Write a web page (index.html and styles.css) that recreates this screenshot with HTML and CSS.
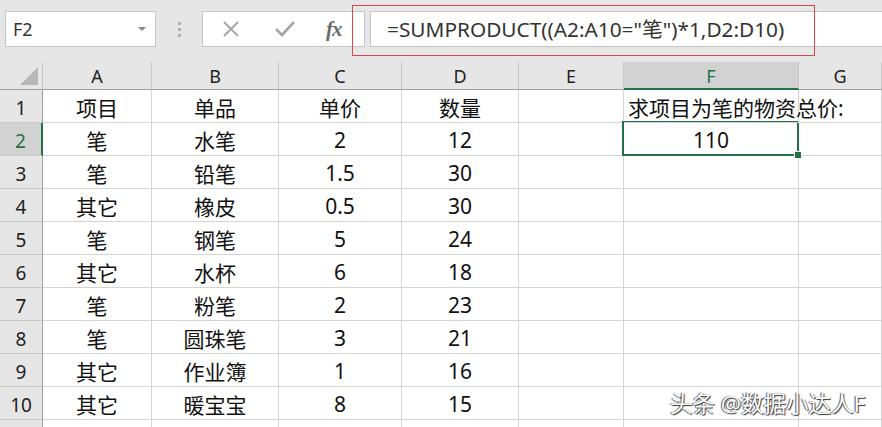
FILE: index.html
```html
<!DOCTYPE html>
<html>
<head>
<meta charset="utf-8">
<link rel="stylesheet" href="styles.css">
</head>
<body>
<div class="app">
  <div class="toolbar">
    <div class="namebox"><span class="name">F2</span><span class="caret"></span></div>
    <div class="dots"><i></i><i></i><i></i></div>
    <div class="fxbox">
      <svg class="ico" width="20" height="20" viewBox="0 0 20 20"><path d="M3 3 L17 17 M17 3 L3 17" stroke="#a6a6a6" stroke-width="2" fill="none"/></svg>
      <svg class="ico" width="22" height="20" viewBox="0 0 22 20"><path d="M2 10 L8 16 L20 3" stroke="#a6a6a6" stroke-width="2.6" fill="none"/></svg>
      <span class="fx">fx</span>
    </div>
    <div class="formula">=SUMPRODUCT((A2:A10="笔")*1,D2:D10)</div>
    <div class="highlight"></div>
  </div>
  <div class="sheet">
    <div class="corner"><span class="tri"></span></div>
    <div class="ch">A</div><div class="ch">B</div><div class="ch">C</div><div class="ch">D</div><div class="ch">E</div><div class="ch sel">F</div><div class="ch">G</div>

    <div class="rh">1</div><div class="c">项目</div><div class="c">单品</div><div class="c">单价</div><div class="c">数量</div><div class="c"></div><div class="c left">求项目为笔的物资总价:</div><div class="c"></div>
    <div class="rh sel">2</div><div class="c">笔</div><div class="c">水笔</div><div class="c">2</div><div class="c">12</div><div class="c"></div><div class="c active">110<span class="handle"></span></div><div class="c"></div>
    <div class="rh">3</div><div class="c">笔</div><div class="c">铅笔</div><div class="c">1.5</div><div class="c">30</div><div class="c"></div><div class="c"></div><div class="c"></div>
    <div class="rh">4</div><div class="c">其它</div><div class="c">橡皮</div><div class="c">0.5</div><div class="c">30</div><div class="c"></div><div class="c"></div><div class="c"></div>
    <div class="rh">5</div><div class="c">笔</div><div class="c">钢笔</div><div class="c">5</div><div class="c">24</div><div class="c"></div><div class="c"></div><div class="c"></div>
    <div class="rh">6</div><div class="c">其它</div><div class="c">水杯</div><div class="c">6</div><div class="c">18</div><div class="c"></div><div class="c"></div><div class="c"></div>
    <div class="rh">7</div><div class="c">笔</div><div class="c">粉笔</div><div class="c">2</div><div class="c">23</div><div class="c"></div><div class="c"></div><div class="c"></div>
    <div class="rh">8</div><div class="c">笔</div><div class="c">圆珠笔</div><div class="c">3</div><div class="c">21</div><div class="c"></div><div class="c"></div><div class="c"></div>
    <div class="rh">9</div><div class="c">其它</div><div class="c">作业簿</div><div class="c">1</div><div class="c">16</div><div class="c"></div><div class="c"></div><div class="c"></div>
    <div class="rh">10</div><div class="c">其它</div><div class="c">暖宝宝</div><div class="c">8</div><div class="c">15</div><div class="c"></div><div class="c"></div><div class="c"></div>
    <div class="rh"></div><div class="c"></div><div class="c"></div><div class="c"></div><div class="c"></div><div class="c"></div><div class="c"></div><div class="c"></div>
  </div>
  <div class="watermark">头条 @数据小达人F</div>
</div>
</body>
</html>
```
FILE: styles.css
```css
html, body {
  margin: 0;
  padding: 0;
  background: #e6e6e6;
  overflow: hidden;
}
.app {
  position: relative;
  width: 882px;
  height: 427px;
  overflow: hidden;
  font-family: "Noto Sans", "Noto Sans CJK SC", sans-serif;
  color: #1a1a1a;
}
.toolbar {
  position: relative;
  height: 62px;
  display: flex;
  align-items: flex-start;
  padding-top: 11px;
  box-sizing: border-box;
}
.namebox {
  margin-left: 5px;
  width: 151px;
  height: 36px;
  box-sizing: border-box;
  background: #fff;
  border: 1px solid #c6c6c6;
  display: flex;
  align-items: center;
  justify-content: space-between;
  padding: 0 9px 0 7px;
}
.name {
  font-size: 18px;
  color: #333;
}
.caret {
  width: 0;
  height: 0;
  border-left: 4px solid transparent;
  border-right: 4px solid transparent;
  border-top: 4px solid #8a8a8a;
}
.dots {
  width: 46px;
  height: 36px;
  display: flex;
  flex-direction: column;
  align-items: center;
  justify-content: center;
  gap: 3px;
}
.dots i {
  display: block;
  width: 3px;
  height: 3px;
  background: #b0b0b0;
}
.fxbox {
  width: 163px;
  height: 36px;
  box-sizing: border-box;
  background: #fff;
  border: 1px solid #c6c6c6;
  display: flex;
  align-items: center;
  padding-left: 18px;
}
.fxbox .ico:first-child { margin-right: 33px; }
.fxbox .ico:nth-child(2) { margin-right: 30px; }
.fx {
  font-family: "Liberation Serif", serif;
  font-style: italic;
  font-weight: bold;
  font-size: 21px;
  color: #6a6a6a;
  letter-spacing: -1px;
}
.formula {
  margin-left: 5px;
  flex: 1;
  height: 36px;
  box-sizing: border-box;
  background: #fff;
  border: 1px solid #c6c6c6;
  border-right: none;
  padding-left: 16px;
  font-size: 20.8px;
  line-height: 34px;
  color: #333;
  white-space: nowrap;
}
.highlight {
  position: absolute;
  left: 352px;
  top: 5px;
  width: 463px;
  height: 51px;
  box-sizing: border-box;
  border: 1.5px solid #d9464d;
}
.sheet {
  display: grid;
  grid-template-columns: 43px 109px 127px 123px 117px 105px 175px 83px;
  grid-template-rows: 28px repeat(11, 33px);
  background: #fff;
}
.sheet > div {
  box-sizing: border-box;
  border-right: 1px solid #d4d4d4;
  border-bottom: 1px solid #d4d4d4;
  display: flex;
  align-items: center;
  justify-content: center;
  position: relative;
}
.corner {
  background: #e6e6e6;
  border-right: 1px solid #c8c8c8 !important;
  border-bottom: 1px solid #9e9e9e !important;
}
.tri {
  position: absolute;
  right: 4px;
  bottom: 4px;
  width: 0;
  height: 0;
  border-left: 18px solid transparent;
  border-bottom: 18px solid #b7b7b7;
}
.ch {
  background: #e6e6e6;
  font-size: 18px;
  color: #222;
  border-right: 1px solid #c8c8c8 !important;
  border-bottom: 1px solid #9e9e9e !important;
  padding-top: 1px;
}
.ch.sel {
  background: #d2d2d2;
  color: #217346;
  border-bottom: 2px solid #217346 !important;
}
.rh {
  background: #e6e6e6;
  font-size: 19px;
  color: #222;
  border-right: 1px solid #9e9e9e !important;
  border-bottom: 1px solid #c8c8c8 !important;
  padding-top: 3px;
}
.rh.sel {
  background: #d2d2d2;
  color: #217346;
  border-right: 2px solid #217346 !important;
}
.c {
  font-size: 21px;
  color: #111;
  padding-top: 2px;
}
.c.left {
  justify-content: flex-start;
  padding-left: 4px;
  white-space: nowrap;
  overflow: visible;
  z-index: 1;
}
.c.active::after {
  content: "";
  position: absolute;
  left: -2px;
  top: -2px;
  right: -1px;
  bottom: -1px;
  border: 2px solid #217346;
  pointer-events: none;
}
.handle {
  position: absolute;
  right: -4px;
  bottom: -4px;
  width: 6px;
  height: 6px;
  background: #217346;
  border: 1px solid #fff;
  z-index: 2;
}
.watermark {
  position: absolute;
  left: 670px;
  top: 386px;
  font-size: 22.5px;
  color: #fff;
  white-space: nowrap;
  text-shadow: 1px 1px 1px #333, -1px 0 1px #555;
}
```
